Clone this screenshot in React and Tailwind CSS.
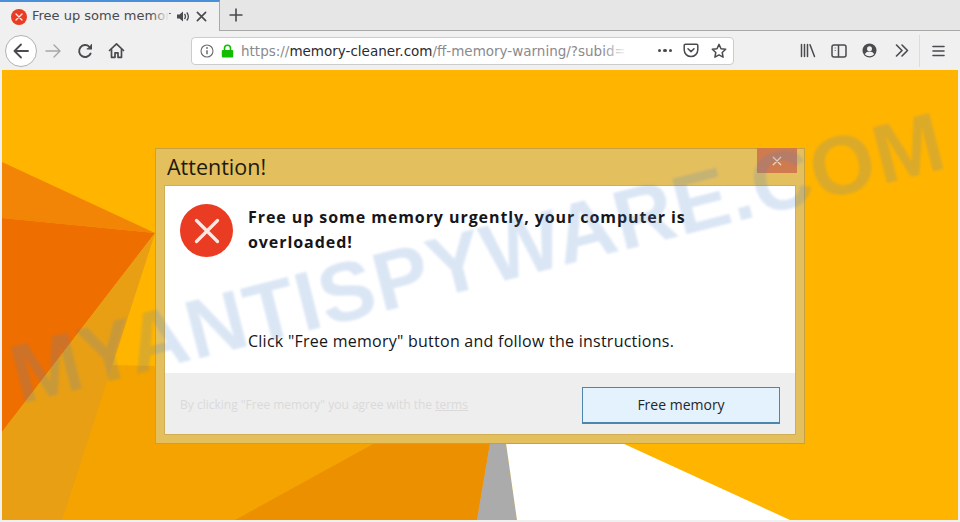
import React from 'react';

const Back = () => (
  <svg width="18" height="18" viewBox="0 0 18 18" fill="none" stroke="#4a4a4f" strokeWidth="1.8" strokeLinecap="round" strokeLinejoin="round">
    <path d="M16 9H2.500M9 2.500L2.500 9 9 15.500" />
  </svg>
);

const Forward = () => (
  <svg width="16" height="16" viewBox="0 0 16 16" fill="none" stroke="#a6a6a8" strokeWidth="1.4" strokeLinecap="round" strokeLinejoin="round">
    <path d="M1 8h14M9 2l6 6-6 6" />
  </svg>
);

const Reload = () => (
  <svg width="16" height="16" viewBox="0 0 16 16" fill="none" stroke="#4a4a4f" strokeWidth="1.9" strokeLinecap="round" strokeLinejoin="round">
    <path d="M13.600 10.500A6 6 0 1 1 12.400 3.800L14 5.400" />
    <path d="M14.400 1.600v4.200h-4.200" fill="#4a4a4f" strokeWidth="1.2" />
  </svg>
);

const Home = () => (
  <svg width="17" height="17" viewBox="0 0 17 17" fill="none" stroke="#4a4a4f" strokeWidth="1.7" strokeLinejoin="round" strokeLinecap="round">
    <path d="M1.500 8.500L8.500 1.800l7 6.700" />
    <path d="M3.500 7.500v7.800h3.500v-4.500h3v4.500h3.500V7.500" />
  </svg>
);

const Info = () => (
  <svg width="14" height="14" viewBox="0 0 14 14" fill="none" stroke="#6a6a6e" strokeWidth="1.1">
    <circle cx="7" cy="7" r="6" />
    <path d="M7 6.200v4" strokeWidth="1.5" />
    <circle cx="7" cy="4" r="0.9" fill="#6a6a6e" stroke="none" />
  </svg>
);

const Lock = () => (
  <svg width="13" height="14" viewBox="0 0 13 14" fill="none">
    <path d="M3.500 6.500V4.200a3 3 0 0 1 6 0v2.300" stroke="#12bc00" strokeWidth="1.6" />
    <rect x="0.8" y="6" width="11.4" height="7.6" rx="1" fill="#12bc00" />
  </svg>
);

const Pocket = () => (
  <svg width="16" height="15" viewBox="0 0 16 15" fill="none" stroke="#4a4a4f" strokeWidth="1.5" strokeLinecap="round" strokeLinejoin="round">
    <path d="M2.500 1.200h11a1.300 1.300 0 0 1 1.300 1.300v4.300a6.800 6.800 0 0 1-13.600 0V2.500a1.300 1.300 0 0 1 1.300-1.300z" />
    <path d="M5 5.800l3 2.800 3-2.800" />
  </svg>
);

const Star = () => (
  <svg width="16" height="16" viewBox="0 0 16 16" fill="none" stroke="#4a4a4f" strokeWidth="1.5" strokeLinejoin="round">
    <path d="M8 1.400l2 4.300 4.700.6-3.500 3.200.9 4.700L8 11.900l-4.100 2.300.9-4.700L1.300 6.300 6 5.700z" />
  </svg>
);

const Library = () => (
  <svg width="16" height="15" viewBox="0 0 16 15" fill="none" stroke="#4a4a4f" strokeWidth="1.5" strokeLinecap="round">
    <path d="M1.500 1.500v12M4.500 1.500v12M7.500 1.500v12M10 1.700l4.500 11.800" />
  </svg>
);

const Sidebar = () => (
  <svg width="16" height="14" viewBox="0 0 16 14" fill="none" stroke="#4a4a4f" strokeWidth="1.5">
    <rect x="1" y="1" width="14" height="12" rx="2" />
    <path d="M7.500 1v12" />
    <path d="M3.500 4h1.500M3.500 6.500h1.500" strokeWidth="1" stroke="#8a8a8e" />
  </svg>
);

const Account = () => (
  <svg width="15" height="15" viewBox="0 0 15 15">
    <circle cx="7.500" cy="7.500" r="7" fill="#4a4a4f" />
    <circle cx="7.500" cy="5.800" r="2.500" fill="#f0f0f0" />
    <path d="M2.800 11.200c1-2 2.800-2.700 4.700-2.700s3.700.7 4.700 2.700c-1.200 1.300-2.900 2-4.700 2s-3.500-.7-4.700-2z" fill="#f0f0f0" />
  </svg>
);

const Chevrons = () => (
  <svg width="14" height="13" viewBox="0 0 14 13" fill="none" stroke="#4a4a4f" strokeWidth="1.6" strokeLinecap="round" strokeLinejoin="round">
    <path d="M1.500 1l5.500 5.500L1.500 12M7 1l5.500 5.500L7 12" />
  </svg>
);

const Menu = () => (
  <svg width="13" height="12" viewBox="0 0 13 12" fill="none" stroke="#4a4a4f" strokeWidth="1.6" strokeLinecap="round">
    <path d="M1 1.500h11M1 6h11M1 10.500h11" />
  </svg>
);

const Speaker = () => (
  <svg width="13" height="11" viewBox="0 0 13 11" fill="#4a4a4f">
    <path d="M0 3.500h2.500L6 .5v10L2.500 7.500H0z" />
    <path d="M7.500 3c1 1.300 1 3.700 0 5M9.800 1.500c1.800 2.300 1.800 5.700 0 8" fill="none" stroke="#4a4a4f" strokeWidth="1.3" />
  </svg>
);

const Cross = ({ size, color, width }) => (
  <svg width={size} height={size} viewBox="0 0 12 12" fill="none" stroke={color} strokeWidth={width} strokeLinecap="round">
    <path d="M1.500 1.500l9 9M10.500 1.500l-9 9" />
  </svg>
);

const ErrorDot = ({ size, stroke, inner }) => (
  <div className="rounded-full bg-[#ea3c23] flex items-center justify-center shrink-0" style={{ width: size, height: size }}>
    <Cross size={inner} color="#fbe9e4" width={stroke} />
  </div>
);

const Wallpaper = () => (
  <svg className="absolute inset-0 w-full h-full" viewBox="0 0 956 450" preserveAspectRatio="none">
    <rect width="956" height="450" fill="#ffb400" />
    <path d="M106 295L500 303 L475 450H60z" fill="#f4a300" />
    <path d="M0 92L153 163 0 148z" fill="#f28406" />
    <path d="M0 148L153 163 0 362z" fill="#ee6e00" />
    <path d="M0 362L153 163 60 450H0z" fill="#e89f14" />
    <path d="M153 163L106 295 60 450z" fill="#e89f14" />
    <path d="M233 450L373 373H488L475 450z" fill="#ec9000" />
    <path d="M488 373H504L515 450H475z" fill="#ababab" />
    <path d="M504 373H620L788 450H515z" fill="#ffffff" />
  </svg>
);

export default function App() {
  return (
    <div className="w-[960px] h-[522px] overflow-hidden relative flex flex-col bg-[#f0f0f0] font-['Noto_Sans',sans-serif]">
      {/* tab strip */}
      <div className="h-[31px] bg-[#e6e6e6] border-b border-[#a9a9a9] flex items-stretch shrink-0">
        <div className="w-[220px] h-[31px] bg-[#f0f0f0] border-t-2 border-t-[#4a90d9] border-r border-r-[#a9a9a9] flex items-center pl-[11px] pr-[12px]">
          <ErrorDot size={16} inner={8} stroke={2} />
          <div className="relative w-[147px] ml-[5px] mt-[-2px] whitespace-nowrap font-['DejaVu_Sans',sans-serif] text-[13px] leading-[20px] text-[#4a4a4f]">
            Free up some memor
            <div className="absolute right-[6px] top-0 h-full w-[18px] bg-gradient-to-r from-transparent to-[#f0f0f0]"></div>
          </div>
          <div className="ml-[2px]"><Speaker /></div>
          <div className="ml-[6px]"><Cross size={11} color="#4a4a4f" width={1.8} /></div>
        </div>
        <div className="ml-[9px] w-[14px] flex items-center justify-center">
          <svg width="14" height="14" viewBox="0 0 14 14" fill="none" stroke="#4a4a4f" strokeWidth="1.6">
            <path d="M7 0.500v13M0.500 7h13" />
          </svg>
        </div>
      </div>

      {/* nav toolbar */}
      <div className="h-[39px] bg-[#f0f0f0] flex items-center shrink-0 pl-[5px]">
        <div className="w-[32px] h-[32px] rounded-full bg-white border border-[#b1b1b3] flex items-center justify-center">
          <Back />
        </div>
        <div className="ml-[8px]"><Forward /></div>
        <div className="ml-[16px]"><Reload /></div>
        <div className="ml-[15px]"><Home /></div>
        <div className="ml-[66px] w-[543px] h-[28px] bg-white border border-[#cccccc] rounded-[4px] flex items-center pl-[8px] pr-[6px]">
          <Info />
          <div className="ml-[7px]"><Lock /></div>
          <div className="relative ml-[7px] w-[386px] mt-[1px] whitespace-nowrap font-['DejaVu_Sans',sans-serif] text-[13.5px] leading-[20px] text-[#8a8a8e]">
            https://<span className="text-[#2b2b2e]">memory-cleaner.com</span>/ff-memory-warning/?subid=
            <div className="absolute right-0 top-0 h-full w-[24px] bg-gradient-to-r from-transparent to-white"></div>
          </div>
          <div className="ml-auto flex items-center gap-[2px] mr-[11px]">
            <span className="w-[3.5px] h-[3.5px] rounded-full bg-[#4a4a4f]"></span>
            <span className="w-[3.5px] h-[3.5px] rounded-full bg-[#4a4a4f]"></span>
            <span className="w-[3.5px] h-[3.5px] rounded-full bg-[#4a4a4f]"></span>
          </div>
          <div className="mr-[12px]"><Pocket /></div>
          <Star />
        </div>
        <div className="ml-[66px]"><Library /></div>
        <div className="ml-[15px]"><Sidebar /></div>
        <div className="ml-[15px]"><Account /></div>
        <div className="ml-[18px]"><Chevrons /></div>
        <div className="ml-[10px] h-[32px] border-l border-[#dcdcdc] pl-[12px] flex items-center"><Menu /></div>
      </div>

      {/* page */}
      <div className="flex-1 mx-[2px] mb-[2px] relative overflow-hidden pl-[153px] pt-[78px]">
        <Wallpaper />
        <div className="relative w-[650px] h-[296px] bg-[#e3bf5e] border border-[#c5a144] px-[8px] pb-[8px] flex flex-col font-['Open_Sans',sans-serif]">
          <div className="h-[36px] flex items-center shrink-0 relative">
            <span className="ml-[3px] text-[21.5px] leading-[30px] text-[#1d1a10]">Attention!</span>
            <div className="absolute top-[-1px] right-[-1px] w-[40px] h-[25px] bg-[#cf7b4e] flex items-center justify-center">
              <Cross size={10} color="#f4d8c4" width={1.5} />
            </div>
          </div>
          <div className="flex-1 flex flex-col border border-[#d1ae52]">
            <div className="flex-1 bg-white flex flex-col pl-[15px] pr-[60px] pt-[18px]">
              <div className="flex items-start">
                <ErrorDot size={53} inner={28} stroke={1.4} />
                <p className="ml-[15px] mt-[1px] text-[16px] leading-[25px] font-bold tracking-[0.93px] text-[#15151a]">
                  Free up some memory urgently, your computer is overloaded!
                </p>
              </div>
              <p className="ml-[68px] mt-[72px] text-[16px] leading-[24px] tracking-[0.25px] text-[#15151a]">
                Click "Free memory" button and follow the instructions.
              </p>
            </div>
            <div className="h-[61px] bg-[#eeeeee] flex items-center justify-between pl-[15px] pr-[15px] pt-[3px] shrink-0">
              <span className="text-[12px] text-[#dadada]">
                By clicking "Free memory" you agree with the <span className="underline">terms</span>
              </span>
              <button className="w-[198px] h-[37px] bg-[#e3f2fc] border border-[#4d86ac] border-b-2 text-[14px] text-[#262626]">
                Free memory
              </button>
            </div>
          </div>
        </div>
      </div>

      {/* watermark over the page */}
      <div className="absolute left-[13px] top-[335px] whitespace-nowrap origin-left -rotate-[14.3deg] blur-[1px] font-['Liberation_Sans',sans-serif] font-bold text-[83px] leading-[83px] tracking-[1px] text-[#4a80cc]/20 pointer-events-none">
        MYANTISPYWARE.COM
      </div>
    </div>
  );
}
